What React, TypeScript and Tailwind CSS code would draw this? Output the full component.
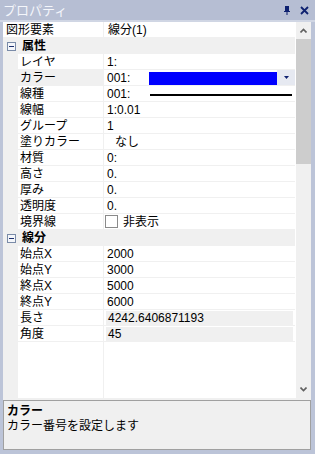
import { ReactNode } from "react";

const font = "font-['Liberation_Sans','Noto_Sans_CJK_JP',sans-serif]";

function Category({ label }: { label: string }) {
  return (
    <div className="flex h-[16px] shrink-0 items-center bg-[#f0f0f0]">
      <div className="ml-[4px] flex h-[9px] w-[9px] items-center justify-center border border-[#7a8ba8] bg-[#f4f6fa]">
        <div className="h-px w-[5px] bg-[#1c2f6e]" />
      </div>
      <span className="ml-[6px] font-bold">{label}</span>
    </div>
  );
}

function Row({
  label,
  children,
  selected,
  readOnly,
}: {
  label: string;
  children?: ReactNode;
  selected?: boolean;
  readOnly?: boolean;
}) {
  return (
    <div className="flex h-[16px] shrink-0">
      <div className="w-[15px] shrink-0 bg-[#f0f0f0]" />
      <div
        className={`flex w-[85px] shrink-0 items-center border-b border-[#f0f0f0] pl-[2px] ${
          selected ? "bg-[#f0f0f0]" : "bg-white"
        }`}
      >
        {label}
      </div>
      <div className="w-px shrink-0 bg-[#f0f0f0]" />
      <div className="flex flex-1 border-b border-[#f0f0f0] bg-white">
        {readOnly ? (
          <div className="mx-[2px] mt-px flex flex-1 items-center bg-[#f0f0f0] pl-[2px]">{children}</div>
        ) : (
          <div className="flex flex-1 items-center pl-[3px]">{children}</div>
        )}
      </div>
    </div>
  );
}

export default function App() {
  return (
    <div className={`flex h-[454px] w-[315px] flex-col bg-[#bcc4d8] text-[12px] leading-none text-black ${font}`}>
      {/* title bar */}
      <div className="flex h-[20px] shrink-0 items-center bg-[#b6bed3] pl-[3px] pr-[6px]">
        <span className="flex-1 text-[13px] text-[#f4f6fb]">プロパティ</span>
        <svg width="8" height="9" viewBox="0 0 8 9" className="mr-[9px]">
          <path d="M2 0h4v5H2z M1 5h6v1H1z M3.5 6h1v3h-1z M4.5 1h1v4h-1z" fill="#0e2170" />
          <path d="M2 0h1v5H2z" fill="#0e2170" />
        </svg>
        <svg width="9" height="9" viewBox="0 0 9 9">
          <path d="M1 1l7 7M8 1L1 8" stroke="#0e2170" strokeWidth="1.8" />
        </svg>
      </div>
      <div className="h-[2px] shrink-0 bg-[#d0d6e4]" />

      <div className="flex flex-1 flex-col pl-[3px] pr-[4px]">
        {/* grid + scrollbar */}
        <div className="flex h-[376px] shrink-0 bg-white">
          <div className="flex w-[292px] flex-col">
            <div className="flex h-[16px] shrink-0 border-b border-[#f0f0f0]">
              <div className="flex w-[100px] items-center pl-[3px]">図形要素</div>
              <div className="w-px bg-[#f0f0f0]" />
              <div className="flex flex-1 items-center pl-[4px]">線分(1)</div>
            </div>
            <Category label="属性" />
            <Row label="レイヤ">1:</Row>
            <Row label="カラー" selected>
              <span className="w-[42px]">001:</span>
              <div className="mt-px h-[13px] flex-1 bg-[#0000ff]" />
              <div className="flex h-[15px] w-[18px] items-center justify-center bg-[#e6e9f1]">
                <svg width="5" height="3" viewBox="0 0 5 3">
                  <path d="M0 0h5L2.5 3z" fill="#0e2170" />
                </svg>
              </div>
            </Row>
            <Row label="線種">
              <span className="w-[43px]">001:</span>
              <div className="mr-[3px] mt-[3px] h-[2px] flex-1 bg-black" />
            </Row>
            <Row label="線幅">1:0.01</Row>
            <Row label="グループ">1</Row>
            <Row label="塗りカラー">
              <span className="pl-[8px]">なし</span>
            </Row>
            <Row label="材質">0:</Row>
            <Row label="高さ">0.</Row>
            <Row label="厚み">0.</Row>
            <Row label="透明度">0.</Row>
            <Row label="境界線">
              <div className="-ml-[2px] h-[13px] w-[13px] border border-[#8a8a8a] bg-white" />
              <span className="ml-[5px]">非表示</span>
            </Row>
            <Category label="線分" />
            <Row label="始点X">2000</Row>
            <Row label="始点Y">3000</Row>
            <Row label="終点X">5000</Row>
            <Row label="終点Y">6000</Row>
            <Row label="長さ" readOnly>
              4242.6406871193
            </Row>
            <Row label="角度" readOnly>
              45
            </Row>
            <div className="flex flex-1">
              <div className="w-[15px] bg-[#f0f0f0]" />
              <div className="w-[85px]" />
              <div className="w-px bg-[#f0f0f0]" />
              <div className="flex-1" />
            </div>
          </div>
          <div className="w-[1px]" />
          {/* scrollbar */}
          <div className="flex w-[15px] flex-col bg-[#f0f0f0]">
            <div className="flex h-[17px] items-center justify-center">
              <svg width="7" height="5" viewBox="0 0 7 5">
                <path d="M0.5 4.5L3.5 1.5L6.5 4.5" stroke="#606060" strokeWidth="1.6" fill="none" />
              </svg>
            </div>
            <div className="h-[125px] bg-[#cdcdcd]" />
            <div className="flex-1" />
            <div className="flex h-[17px] items-center justify-center">
              <svg width="7" height="5" viewBox="0 0 7 5">
                <path d="M0.5 0.5L3.5 3.5L6.5 0.5" stroke="#606060" strokeWidth="1.6" fill="none" />
              </svg>
            </div>
          </div>
        </div>

        <div className="h-[2px] shrink-0 bg-[#f0f0f0]" />

        {/* description */}
        <div className="flex h-[50px] shrink-0 flex-col border border-[#a0a0a0] bg-[#f0f0f0] px-[3px] pt-[4px]">
          <span className="font-bold">カラー</span>
          <span className="mt-[3px]">カラー番号を設定します</span>
        </div>
      </div>
    </div>
  );
}
